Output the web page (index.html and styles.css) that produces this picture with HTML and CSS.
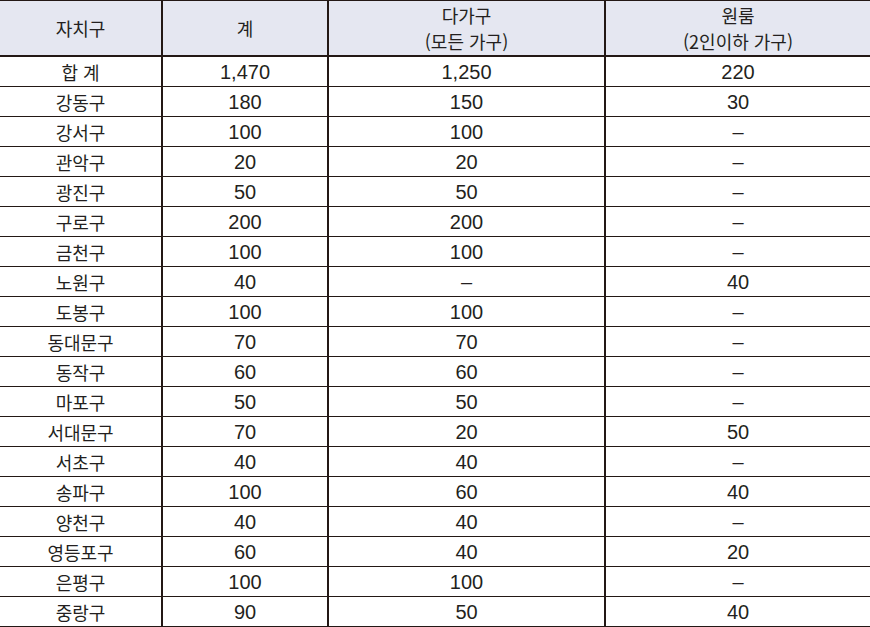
FILE: index.html
```html
<!DOCTYPE html>
<html lang="ko">
<head>
<meta charset="utf-8">
<link rel="stylesheet" href="styles.css">
</head>
<body>
<table class="grid">
  <colgroup>
    <col class="c1"><col class="c2"><col class="c3"><col class="c4">
  </colgroup>
  <thead>
    <tr>
      <th>자치구</th>
      <th>계</th>
      <th><span class="line">다가구</span><span class="line">(모든 가구)</span></th>
      <th><span class="line">원룸</span><span class="line">(2인이하 가구)</span></th>
    </tr>
  </thead>
  <tbody>
    <tr><td class="name">합 계</td><td>1,470</td><td>1,250</td><td>220</td></tr>
    <tr><td class="name">강동구</td><td>180</td><td>150</td><td>30</td></tr>
    <tr><td class="name">강서구</td><td>100</td><td>100</td><td>–</td></tr>
    <tr><td class="name">관악구</td><td>20</td><td>20</td><td>–</td></tr>
    <tr><td class="name">광진구</td><td>50</td><td>50</td><td>–</td></tr>
    <tr><td class="name">구로구</td><td>200</td><td>200</td><td>–</td></tr>
    <tr><td class="name">금천구</td><td>100</td><td>100</td><td>–</td></tr>
    <tr><td class="name">노원구</td><td>40</td><td>–</td><td>40</td></tr>
    <tr><td class="name">도봉구</td><td>100</td><td>100</td><td>–</td></tr>
    <tr><td class="name">동대문구</td><td>70</td><td>70</td><td>–</td></tr>
    <tr><td class="name">동작구</td><td>60</td><td>60</td><td>–</td></tr>
    <tr><td class="name">마포구</td><td>50</td><td>50</td><td>–</td></tr>
    <tr><td class="name">서대문구</td><td>70</td><td>20</td><td>50</td></tr>
    <tr><td class="name">서초구</td><td>40</td><td>40</td><td>–</td></tr>
    <tr><td class="name">송파구</td><td>100</td><td>60</td><td>40</td></tr>
    <tr><td class="name">양천구</td><td>40</td><td>40</td><td>–</td></tr>
    <tr><td class="name">영등포구</td><td>60</td><td>40</td><td>20</td></tr>
    <tr><td class="name">은평구</td><td>100</td><td>100</td><td>–</td></tr>
    <tr><td class="name">중랑구</td><td>90</td><td>50</td><td>40</td></tr>
  </tbody>
</table>
</body>
</html>
```

FILE: styles.css
```css
html, body {
  margin: 0;
  padding: 0;
  background: #ffffff;
}

.grid {
  width: 870px;
  border-collapse: collapse;
  table-layout: fixed;
  font-family: "Liberation Sans", "Noto Sans CJK KR", sans-serif;
  font-size: 20px;
  color: #231f20;
  border-top: 1px solid #231815;
  border-bottom: 2px solid #231815;
}

.c1 { width: 162px; }
.c2 { width: 166px; }
.c3 { width: 277px; }
.c4 { width: 265px; }

.grid th {
  background: #e5e7f1;
  font-weight: normal;
  font-family: "Noto Sans CJK KR", sans-serif;
  font-size: 18px;
  line-height: 26px;
  height: 54px;
  padding: 0;
  text-align: center;
  vertical-align: middle;
  border-bottom: 2px solid #231815;
  border-left: 2px solid #231815;
}

.grid th .line {
  display: block;
  height: 26px;
  line-height: 26px;
}

.grid td {
  height: 28px;
  padding: 1px 0 0 0;
  text-align: center;
  vertical-align: middle;
  line-height: 28px;
  border-bottom: 1px solid #231815;
  border-left: 2px solid #231815;
}

.grid th:first-child,
.grid td:first-child {
  border-left: none;
}

.grid td.name {
  font-family: "Noto Sans CJK KR", sans-serif;
  font-size: 18px;
}
```
